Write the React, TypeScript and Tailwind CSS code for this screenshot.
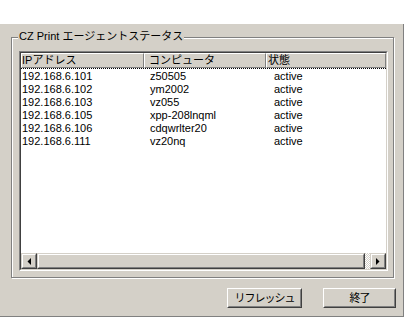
import React from "react";

const rows = [
  ["192.168.6.101", "z50505", "active"],
  ["192.168.6.102", "ym2002", "active"],
  ["192.168.6.103", "vz055", "active"],
  ["192.168.6.105", "xpp-208lnqml", "active"],
  ["192.168.6.106", "cdqwrlter20", "active"],
  ["192.168.6.111", "vz20nq", "active"],
];

function Raised({ className, children }: { className: string; children?: React.ReactNode }) {
  return (
    <div className={"border border-t-[#d4d0c8] border-l-[#d4d0c8] border-r-[#404040] border-b-[#404040] " + className}>
      <div className="w-full h-full border border-t-white border-l-white border-r-[#808080] border-b-[#808080] bg-[#d4d0c8] flex items-center justify-center">
        {children}
      </div>
    </div>
  );
}

function PushButton({ className, children }: { className: string; children: React.ReactNode }) {
  return (
    <div className={"h-[20px] border border-t-white border-l-white border-r-[#404040] border-b-[#404040] " + className}>
      <div className="w-full h-full border border-t-[#d4d0c8] border-l-[#d4d0c8] border-r-[#808080] border-b-[#808080] bg-[#d4d0c8] flex items-center justify-center text-[11px] leading-[13px] tracking-[-1px]">
        {children}
      </div>
    </div>
  );
}

export default function App() {
  return (
    <div className="w-[407px] h-[317px] bg-white pt-[24px] font-['Liberation_Sans','Noto_Sans_CJK_JP',sans-serif] text-[11px] leading-[13px] text-black">
      <div className="w-[404px] h-[293px] bg-[#d4d0c8] border-r border-b border-[#808080] pl-[11px] pt-[13px] flex flex-col">
        <div className="relative w-[383px] h-[241px] border border-[#808080] shadow-[inset_1px_1px_0_#fff,1px_1px_0_#fff] pl-[7px] pt-[13px]">
          <div className="absolute left-[6px] top-[-8px] px-[1px] bg-[#d4d0c8] whitespace-nowrap">
            CZ Print エージェントステータス
          </div>
          <div className="w-[369px] h-[220px] border border-t-[#808080] border-l-[#808080] border-r-white border-b-white">
            <div className="w-full h-full border border-t-[#404040] border-l-[#404040] border-r-[#d4d0c8] border-b-[#d4d0c8] bg-white flex flex-col">
              <div className="h-[15px] flex bg-[#d4d0c8]">
                <div className="w-[123px] border border-t-white border-l-white border-r-[#808080] border-b-[#808080] whitespace-nowrap">IPアドレス</div>
                <div className="w-[122px] border border-t-white border-l-white border-r-[#808080] border-b-[#808080] pl-[4px] whitespace-nowrap">コンピュータ</div>
                <div className="flex-1 border border-t-white border-l-white border-r-[#808080] border-b-[#808080] pl-[1px] whitespace-nowrap">状態</div>
              </div>
              <div className="flex-1 border-t border-dotted border-black pt-[1px]">
                {rows.map((r) => (
                  <div key={r[0]} className="h-[13px] flex whitespace-nowrap">
                    <div className="w-[123px] pl-[1px]">{r[0]}</div>
                    <div className="w-[122px] pl-[6px]">{r[1]}</div>
                    <div className="flex-1 pl-[8px]">{r[2]}</div>
                  </div>
                ))}
              </div>
              <div className="h-[16px] flex">
                <Raised className="w-[16px] h-[16px]">
                  <svg width="4" height="7" viewBox="0 0 4 7"><path d="M4 0 L4 7 L0.5 3.5 Z" fill="#000" /></svg>
                </Raised>
                <Raised className="w-[328px] h-[16px]" />
                <div className="w-[5px] h-[16px] bg-[repeating-conic-gradient(#ffffff_0_25%,#d4d0c8_0_50%)] bg-[length:2px_2px]" />
                <Raised className="w-[16px] h-[16px]">
                  <svg width="4" height="7" viewBox="0 0 4 7"><path d="M0 0 L0 7 L3.5 3.5 Z" fill="#000" /></svg>
                </Raised>
              </div>
            </div>
          </div>
        </div>
        <div className="mt-[10px] w-[385px] flex justify-end gap-[21px]">
          <PushButton className="w-[75px]">リフレッシュ</PushButton>
          <PushButton className="w-[73px]">終了</PushButton>
        </div>
      </div>
    </div>
  );
}
